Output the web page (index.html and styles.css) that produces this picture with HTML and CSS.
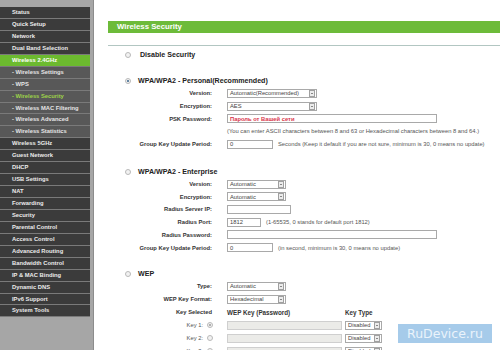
FILE: index.html
```html
<!DOCTYPE html>
<html lang="en">
<head>
    <meta charset="UTF-8">
    <title>Wireless Security</title>
    <link rel="stylesheet" href="styles.css">
</head>
<body>
    <div class="page">
        <nav class="menu">
            <ul>
                <li>Status</li>
                <li>Quick Setup</li>
                <li>Network</li>
                <li>Dual Band Selection</li>
                <li class="open">Wireless 2.4GHz</li>
                <li class="sub">- Wireless Settings</li>
                <li class="sub">- WPS</li>
                <li class="sub active">- Wireless Security</li>
                <li class="sub">- Wireless MAC Filtering</li>
                <li class="sub">- Wireless Advanced</li>
                <li class="sub">- Wireless Statistics</li>
                <li>Wireless 5GHz</li>
                <li>Guest Network</li>
                <li>DHCP</li>
                <li>USB Settings</li>
                <li>NAT</li>
                <li>Forwarding</li>
                <li>Security</li>
                <li>Parental Control</li>
                <li>Access Control</li>
                <li>Advanced Routing</li>
                <li>Bandwidth Control</li>
                <li>IP &amp; MAC Binding</li>
                <li>Dynamic DNS</li>
                <li>IPv6 Support</li>
                <li>System Tools</li>
            </ul>
        </nav>

        <main class="content">
            <h1 class="panel-title">Wireless Security</h1>
            <div class="rule"></div>

            <div class="mode mode-first">
                <span class="radio"></span>
                <span class="mode-name mode-name-wide">Disable Security</span>
            </div>

            <!-- WPA personal -->
            <div class="mode mode-personal">
                <span class="radio checked"></span>
                <span class="mode-name">WPA/WPA2 - Personal(Recommended)</span>
            </div>
            <div class="row">
                <label class="label">Version:</label>
                <div class="select w90"><span>Automatic(Recommended)</span><i class="arrow"></i></div>
            </div>
            <div class="row">
                <label class="label">Encryption:</label>
                <div class="select w90"><span>AES</span><i class="arrow"></i></div>
            </div>
            <div class="row">
                <label class="label">PSK Password:</label>
                <div class="input w210 red">Пароль от Вашей сети</div>
            </div>
            <div class="row row-help">
                <span class="label"></span>
                <span class="hint">(You can enter ASCII characters between 8 and 63 or Hexadecimal characters between 8 and 64.)</span>
            </div>
            <div class="row row-after-help">
                <label class="label">Group Key Update Period:</label>
                <div class="input w46">0</div>
                <span class="hint">Seconds (Keep it default if you are not sure, minimum is 30, 0 means no update)</span>
            </div>

            <!-- WPA enterprise -->
            <div class="mode mode-enterprise">
                <span class="radio"></span>
                <span class="mode-name">WPA/WPA2 - Enterprise</span>
            </div>
            <div class="row">
                <label class="label">Version:</label>
                <div class="select w59"><span>Automatic</span><i class="arrow"></i></div>
            </div>
            <div class="row">
                <label class="label">Encryption:</label>
                <div class="select w59"><span>Automatic</span><i class="arrow"></i></div>
            </div>
            <div class="row">
                <label class="label">Radius Server IP:</label>
                <div class="input w64"></div>
            </div>
            <div class="row">
                <label class="label">Radius Port:</label>
                <div class="input w34">1812</div>
                <span class="hint">(1-65535, 0 stands for default port 1812)</span>
            </div>
            <div class="row">
                <label class="label">Radius Password:</label>
                <div class="input w210"></div>
            </div>
            <div class="row">
                <label class="label">Group Key Update Period:</label>
                <div class="input w46">0</div>
                <span class="hint">(in second, minimum is 30, 0 means no update)</span>
            </div>

            <!-- WEP -->
            <div class="mode mode-wep">
                <span class="radio"></span>
                <span class="mode-name">WEP</span>
            </div>
            <div class="row row-wep">
                <label class="label">Type:</label>
                <div class="select w59"><span>Automatic</span><i class="arrow"></i></div>
            </div>
            <div class="row row-wep">
                <label class="label">WEP Key Format:</label>
                <div class="select w59"><span>Hexadecimal</span><i class="arrow"></i></div>
            </div>
            <div class="row row-wep">
                <label class="label">Key Selected</label>
                <span class="col-head key-col">WEP Key (Password)</span>
                <span class="col-head">Key Type</span>
            </div>
            <div class="row row-wep">
                <label class="label key-label">Key 1: <span class="radio checked dim"></span></label>
                <div class="input key-col disabled"></div>
                <div class="select w37"><span>Disabled</span><i class="arrow"></i></div>
            </div>
            <div class="row row-wep">
                <label class="label key-label">Key 2: <span class="radio"></span></label>
                <div class="input key-col disabled"></div>
                <div class="select w37"><span>Disabled</span><i class="arrow"></i></div>
            </div>
            <div class="row row-wep">
                <label class="label key-label">Key 3: <span class="radio"></span></label>
                <div class="input key-col disabled"></div>
                <div class="select w37"><span>Disabled</span><i class="arrow"></i></div>
            </div>
        </main>
    </div>

    <div class="watermark">RuDevice.ru</div>
</body>
</html>
```

FILE: styles.css
```css
* {
    box-sizing: border-box;
    margin: 0;
    padding: 0;
}

html, body {
    width: 500px;
    height: 350px;
    overflow: hidden;
}

body {
    font-family: "Liberation Sans", Arial, sans-serif;
    font-size: 5.8px;
    color: #333333;
    background-color: #ffffff;
    position: relative;
}

.page {
    display: flex;
    height: 350px;
}

/* left menu */
.menu {
    width: 94px;
    flex-shrink: 0;
    background-color: #a6a6a6;
    padding-top: 7px;
    border-right: 1px solid #8c8c8c;
}

.menu ul {
    list-style: none;
    width: 90px;
}

.menu li {
    height: 11.95px;
    line-height: 11px;
    padding-left: 12px;
    background-color: #3b3b3b;
    border-bottom: 1px solid #7a7a7a;
    color: #ececec;
    font-weight: 700;
    white-space: nowrap;
}

.menu li.open {
    background-color: #6cba2f;
    color: #ffffff;
}

.menu li.sub {
    background-color: #585858;
    font-weight: 700;
    color: #e6e6e6;
}

.menu li.active {
    color: #9ed34a;
}

/* content */
.content {
    flex: 1;
    padding: 21px 0 0 14px;
    overflow: hidden;
}

.panel-title {
    height: 12px;
    line-height: 12px;
    background-color: #6dbb3a;
    color: #ffffff;
    font-size: 7.8px;
    font-weight: 700;
    padding-left: 9px;
}

.rule {
    height: 1px;
    margin-top: 12px;
    background-color: #b2c6c2;
}

.mode {
    display: flex;
    align-items: center;
    height: 12px;
    padding-left: 17px;
}

.mode-first {
    margin-top: 3px;
}

.mode-personal {
    margin-top: 14px;
}

.mode-enterprise {
    margin-top: 15px;
}

.mode-wep {
    margin-top: 14px;
}

.mode-name {
    margin-left: 7px;
    font-size: 7.1px;
    font-weight: 700;
    color: #222222;
}

.mode-name-wide {
    margin-left: 9px;
}

.radio {
    display: inline-block;
    width: 6px;
    height: 6px;
    border-radius: 50%;
    border: 1px solid #b9b9b9;
    background-color: #f2f2f2;
    position: relative;
}

.radio.checked::after {
    content: "";
    position: absolute;
    left: 1px;
    top: 1px;
    width: 2px;
    height: 2px;
    border-radius: 50%;
    background-color: #35628a;
}

.radio.dim::after {
    background-color: #9a9a9a;
}

.row {
    display: flex;
    align-items: center;
    height: 12.7px;
}

.row-help {
    height: 11px;
}

.row-after-help {
    margin-top: 2px;
}

.row-wep {
    height: 13px;
}

.label {
    width: 104px;
    margin-right: 15px;
    text-align: right;
    font-weight: 700;
    color: #333333;
    white-space: nowrap;
}

.key-label {
    font-weight: 400;
    color: #555555;
    display: flex;
    align-items: center;
    justify-content: flex-end;
    gap: 4px;
    margin-right: 14px;
    width: 105px;
}

.select,
.input {
    height: 9px;
    border: 1px solid #a9a9a9;
    background-color: #ffffff;
    color: #444444;
    display: flex;
    align-items: center;
    padding-left: 2px;
    white-space: nowrap;
    overflow: hidden;
}

.select {
    justify-content: space-between;
    padding-right: 1px;
}

.arrow {
    width: 6px;
    height: 7px;
    border: 1px solid #a0a0a0;
    background-color: #ececec;
    position: relative;
    flex-shrink: 0;
}

.arrow::after {
    content: "";
    position: absolute;
    left: 1px;
    top: 2px;
    border-left: 1.2px solid transparent;
    border-right: 1.2px solid transparent;
    border-top: 1.5px solid #222222;
}

.input.red {
    color: #d8334a;
    font-weight: 700;
}

.input.disabled {
    background-color: #ebebe8;
    border-color: #cfcfcf;
}

.w90 { width: 90px; }
.w59 { width: 59px; }
.w210 { width: 210px; }
.w46 { width: 46px; }
.w64 { width: 64px; }
.w34 { width: 34px; }
.w37 { width: 37px; }

.key-col {
    width: 115px;
    margin-right: 3px;
}

.hint {
    margin-left: 5px;
    color: #555555;
    white-space: nowrap;
}

.row-help .hint {
    margin-left: 0;
}

.col-head {
    font-size: 6.3px;
    font-weight: 700;
    color: #333333;
}

.watermark {
    position: absolute;
    left: 398px;
    top: 324px;
    width: 94px;
    height: 19px;
    background-color: #a6cbea;
    color: #eaf3fb;
    font-family: "DejaVu Sans", sans-serif;
    font-size: 12.5px;
    line-height: 19px;
    text-align: center;
}
```
